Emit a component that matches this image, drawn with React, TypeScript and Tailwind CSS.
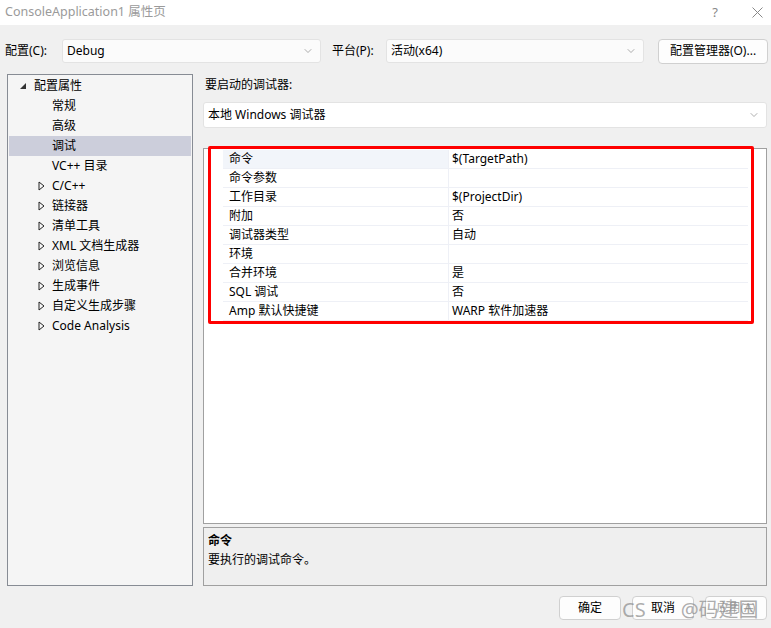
import { ChevronDown } from 'lucide-react'

const font = { fontFamily: '"Noto Sans", "Noto Sans CJK SC", sans-serif' }

const treeItems: { label: string; expandable?: boolean; selected?: boolean }[] = [
  { label: '常规' },
  { label: '高级' },
  { label: '调试', selected: true },
  { label: 'VC++ 目录' },
  { label: 'C/C++', expandable: true },
  { label: '链接器', expandable: true },
  { label: '清单工具', expandable: true },
  { label: 'XML 文档生成器', expandable: true },
  { label: '浏览信息', expandable: true },
  { label: '生成事件', expandable: true },
  { label: '自定义生成步骤', expandable: true },
  { label: 'Code Analysis', expandable: true },
]

const props: [string, string][] = [
  ['命令', '$(TargetPath)'],
  ['命令参数', ''],
  ['工作目录', '$(ProjectDir)'],
  ['附加', '否'],
  ['调试器类型', '自动'],
  ['环境', ''],
  ['合并环境', '是'],
  ['SQL 调试', '否'],
  ['Amp 默认快捷键', 'WARP 软件加速器'],
]

function Combo({ value, className }: { value: string; className: string }) {
  return (
    <div className={`flex items-center justify-between bg-[#fbfbfb] border border-[#e3e3e3] rounded-[3px] pl-[4px] pr-[6px] ${className}`}>
      <span>{value}</span>
      <ChevronDown size={12} strokeWidth={1.2} className="text-[#777]" />
    </div>
  )
}

function Button({ label, disabled }: { label: string; disabled?: boolean }) {
  return (
    <button
      className={`w-[62px] h-[24px] rounded-[4px] border border-[#d0d0d0] bg-[#fdfdfd] text-[12px] ${disabled ? 'text-[#a8a8a8]' : 'text-black'}`}
    >
      {label}
    </button>
  )
}

export default function App() {
  return (
    <div style={font} className="w-[771px] h-[628px] bg-[#f0f0f0] text-[12px] text-black flex flex-col overflow-hidden relative">
      {/* title bar */}
      <div className="h-[25px] bg-white flex items-center justify-between pl-[5px] pr-[8px] shrink-0">
        <span className="text-[12.5px] text-[#9a9a9a]">ConsoleApplication1 属性页</span>
        <div className="flex items-center gap-[34px] text-[#888]">
          <span className="text-[13px]">?</span>
          <svg width="11" height="11" viewBox="0 0 11 11">
            <path d="M0.5 0.5 L10.5 10.5 M10.5 0.5 L0.5 10.5" stroke="#888" strokeWidth="1" />
          </svg>
        </div>
      </div>

      {/* config row */}
      <div className="flex items-center h-[24px] mt-[14px] pl-[5px]">
        <span className="w-[57px]">配置(C):</span>
        <Combo value="Debug" className="w-[259px] h-[24px]" />
        <span className="ml-[11px] w-[54px]">平台(P):</span>
        <Combo value="活动(x64)" className="w-[258px] h-[24px]" />
        <button className="ml-[14px] w-[110px] h-[25px] rounded-[4px] border border-[#d0d0d0] bg-[#fdfdfd] text-[12px]">
          配置管理器(O)...
        </button>
      </div>

      {/* main */}
      <div className="flex mt-[11px] pl-[7px] pr-[4px] gap-[10px] h-[512px]">
        {/* tree */}
        <div className="w-[186px] border border-[#878c94] bg-[#f5f5f5] pt-[1px] px-[1px]">
          <div className="h-[20px] flex items-center">
            <svg width="8" height="8" viewBox="0 0 8 8" className="ml-[10px] mr-[7px]">
              <path d="M7 1 L7 7 L1 7 Z" fill="#333" />
            </svg>
            <span>配置属性</span>
          </div>
          {treeItems.map((it) => (
            <div key={it.label} className={`h-[20px] flex items-center ${it.selected ? 'bg-[#cccedb]' : ''}`}>
              <div className="w-[43px] flex justify-end pr-[7px]">
                {it.expandable && (
                  <svg width="7" height="10" viewBox="0 0 7 10">
                    <path d="M1 1 L6 5 L1 9 Z" fill="none" stroke="#222" strokeWidth="1" />
                  </svg>
                )}
              </div>
              <span>{it.label}</span>
            </div>
          ))}
        </div>

        {/* right */}
        <div className="flex-1 flex flex-col">
          <div className="h-[23px] pl-[2px] flex items-center">要启动的调试器:</div>
          <Combo value="本地 Windows 调试器" className="w-full h-[26px] mt-[5px] bg-white" />

          {/* grid */}
          <div className="mt-[20px] h-[377px] border border-[#a0a0a0] bg-white relative">
            <div className="pt-[1px]">
              {props.map(([k, v], i) => (
                <div key={k} className="flex h-[19px] mr-[18px]">
                  <div className="w-[19px]" />
                  <div className={`w-[225px] pl-[6px] flex items-center border-b border-[#eef0f6] ${i === 0 ? 'bg-[#f2f5fa]' : ''}`}>
                    {k}
                  </div>
                  <div className="flex-1 pl-[3px] flex items-center border-b border-l border-[#eef0f6]">{v}</div>
                </div>
              ))}
            </div>
            <div className="absolute left-[4px] top-[-3px] w-[546px] h-[178px] border-[3px] border-[#ff0000] rounded-[2px]" />
          </div>

          {/* description */}
          <div className="mt-[3px] h-[59px] border border-[#a0a0a0] bg-[#efefef] px-[4px] pt-[3px]">
            <div className="font-bold leading-[19px]">命令</div>
            <div className="leading-[19px]">要执行的调试命令。</div>
          </div>
        </div>
      </div>

      {/* buttons */}
      <div className="flex justify-end gap-[11px] pr-[4px] mt-[10px] relative">
        <Button label="确定" />
        <Button label="取消" />
        <Button label="应用(A)" disabled />
        <div className="absolute left-[622px] top-[-1px] text-[20px] text-[#8a8a8a]/70 pointer-events-none whitespace-nowrap">
          CS<span className="invisible">DN</span> @码建国
        </div>
      </div>
    </div>
  )
}
